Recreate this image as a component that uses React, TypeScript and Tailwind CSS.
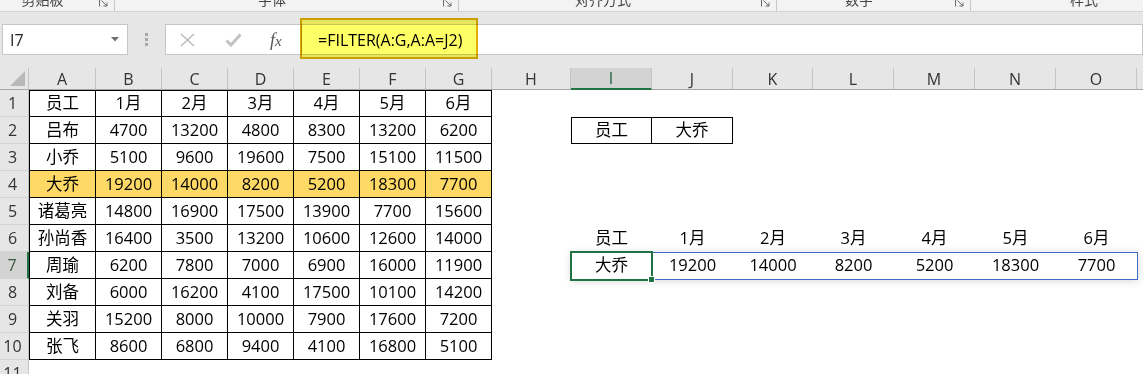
import React from 'react';

// 列宽（与截图像素对齐）
const COLS = [
  { key: 'A', w: 'w-[67px]' },
  { key: 'B', w: 'w-[66px]' },
  { key: 'C', w: 'w-[66px]' },
  { key: 'D', w: 'w-[66px]' },
  { key: 'E', w: 'w-[66px]' },
  { key: 'F', w: 'w-[66px]' },
  { key: 'G', w: 'w-[66px]' },
  { key: 'H', w: 'w-[79px]' },
  { key: 'I', w: 'w-[81px]' },
  { key: 'J', w: 'w-[81px]' },
  { key: 'K', w: 'w-[80px]' },
  { key: 'L', w: 'w-[81px]' },
  { key: 'M', w: 'w-[81px]' },
  { key: 'N', w: 'w-[81px]' },
  { key: 'O', w: 'w-[81px]' },
  { key: 'P', w: 'w-[81px]' },
];

const TABLE: string[][] = [
  ['员工', '1月', '2月', '3月', '4月', '5月', '6月'],
  ['吕布', '4700', '13200', '4800', '8300', '13200', '6200'],
  ['小乔', '5100', '9600', '19600', '7500', '15100', '11500'],
  ['大乔', '19200', '14000', '8200', '5200', '18300', '7700'],
  ['诸葛亮', '14800', '16900', '17500', '13900', '7700', '15600'],
  ['孙尚香', '16400', '3500', '13200', '10600', '12600', '14000'],
  ['周瑜', '6200', '7800', '7000', '6900', '16000', '11900'],
  ['刘备', '6000', '16200', '4100', '17500', '10100', '14200'],
  ['关羽', '15200', '8000', '10000', '7900', '17600', '7200'],
  ['张飞', '8600', '6800', '9400', '4100', '16800', '5100'],
];

const HEADS = ['员工', '1月', '2月', '3月', '4月', '5月', '6月'];
const RESULT = ['大乔', '19200', '14000', '8200', '5200', '18300', '7700'];

const RIBBON = [
  { label: '剪贴板', w: 'w-[115px]', launcher: true },
  { label: '字体', w: 'w-[344px]', launcher: true },
  { label: '对齐方式', w: 'w-[318px]', launcher: true },
  { label: '数字', w: 'w-[194px]', launcher: true },
  { label: '样式', w: 'w-[240px]', launcher: false },
];

interface Cell {
  text?: string;
  cls: string;
}

function cellAt(r: number, c: number): Cell {
  if (r <= 10 && c <= 6) {
    let cls = 'border-black border-r border-b';
    if (c === 0) cls += ' border-l';
    if (r === 1) cls += ' border-t';
    if (r === 4) cls += ' bg-[#ffd966]';
    return { text: TABLE[r - 1][c], cls };
  }
  if (r === 2 && (c === 8 || c === 9)) {
    let cls = 'border-black border-r border-b border-t';
    if (c === 8) cls += ' border-l';
    return { text: c === 8 ? '员工' : '大乔', cls };
  }
  if (r === 6 && c >= 8 && c <= 14) return { text: HEADS[c - 8], cls: '' };
  if (r === 7 && c >= 8 && c <= 14) return { text: RESULT[c - 8], cls: '' };
  return { cls: '' };
}

function Launcher() {
  return (
    <svg width="9" height="9" viewBox="0 0 9 9" className="-mt-[2px] mr-[6px] shrink-0" aria-hidden>
      <path d="M0.5 8.5 V0.5 H8.5" stroke="#6b6b6b" fill="none" />
      <path d="M2.5 2.5 L8 8 M4.5 8 H8 V4.5" stroke="#6b6b6b" fill="none" />
    </svg>
  );
}

export default function App() {
  const rows = Array.from({ length: 11 }, (_, i) => i + 1);

  return (
    <div className="relative h-[374px] w-[1143px] overflow-hidden bg-white font-['Open_Sans','Noto_Sans_CJK_SC',sans-serif] text-black">
      {/* 功能区底部（被裁掉的组名） */}
      <div className="flex h-[12px] overflow-hidden border-b border-[#d5d5d5] bg-[#f3f3f3]">
        {RIBBON.map((g) => (
          <div key={g.label} className={`flex shrink-0 items-start ${g.w} ${g.launcher ? 'border-r border-[#c8c8c8]' : ''}`}>
            <span className="-mt-[7px] flex-1 pr-[14px] text-center text-[14px] leading-[14px] text-[#444]">{g.label}</span>
            {g.launcher && <Launcher />}
          </div>
        ))}
      </div>

      {/* 名称框 + 编辑栏 */}
      <div className="relative flex h-[56px] items-start bg-[#e6e6e6] pt-[12px]">
        <div className="ml-[2px] flex h-[31px] w-[126px] items-center border border-[#c6c6c6] bg-white pl-[7px] pr-[8px]">
          <span className="flex-1 text-[16px] text-[#222]">I7</span>
          <svg width="8" height="5" viewBox="0 0 8 5" aria-hidden>
            <path d="M0 0 H8 L4 4.5 Z" fill="#707070" />
          </svg>
        </div>
        <div className="flex h-[31px] w-[37px] flex-col items-center justify-center gap-[2px]">
          <span className="h-[3px] w-[3px] bg-[#a8a8a8]" />
          <span className="h-[3px] w-[3px] bg-[#a8a8a8]" />
          <span className="h-[3px] w-[3px] bg-[#a8a8a8]" />
        </div>
        <div className="flex h-[31px] w-[137px] items-center border border-[#c6c6c6] bg-white pl-[14px]">
          <svg width="15" height="14" viewBox="0 0 15 14" aria-hidden>
            <path d="M1 1 L14 13 M14 1 L1 13" stroke="#bdbdbd" strokeWidth="1.6" fill="none" />
          </svg>
          <svg width="17" height="14" viewBox="0 0 17 14" className="ml-[30px]" aria-hidden>
            <path d="M1.5 7.5 L6 12 L15.5 1.5" stroke="#c2c2c2" strokeWidth="3" fill="none" />
          </svg>
          <span className="ml-[28px] font-['Liberation_Serif',serif] text-[18px] italic leading-none text-[#555]">
            f<span className="text-[15px]">x</span>
          </span>
        </div>
        <div className="flex h-[31px] flex-1 items-center border-y border-r border-[#c6c6c6] bg-white pl-[16px]">
          <span className="text-[16px] text-black">=FILTER(A:G,A:A=J2)</span>
        </div>
        <div className="pointer-events-none absolute left-[300px] top-[6px] h-[41px] w-[178px] border-2 border-[#e0ae00] bg-[#ffff66] mix-blend-multiply" />
      </div>

      {/* 列标题 */}
      <div className="flex h-[22px] border-b border-[#a6a6a6] bg-[#e6e6e6]">
        <div className="flex w-[29px] shrink-0 items-end justify-end border-r border-[#c4c4c4] pb-[3px] pr-[3px]">
          <svg width="15" height="15" viewBox="0 0 15 15" aria-hidden>
            <path d="M15 0 V15 H0 Z" fill="#b9b9b9" />
          </svg>
        </div>
        {COLS.map((col) => (
          <div
            key={col.key}
            className={`flex shrink-0 items-center justify-center border-r border-[#c4c4c4] text-[16px] ${col.w} ${
              col.key === 'I' ? '-mb-px border-b-2 border-b-[#217346] bg-[#d3d3d3] text-[#1e5e3a]' : 'text-[#333]'
            }`}
          >
            {col.key}
          </div>
        ))}
      </div>

      {/* 工作表主体 */}
      <div className="relative">
        {rows.map((r) => (
          <div key={r} className="flex h-[27px]">
            <div
              className={`flex w-[29px] shrink-0 items-center justify-center border-b border-[#d4d4d4] pr-[3px] text-[16px] ${
                r === 7 ? 'border-r-2 border-r-[#217346] bg-[#d3d3d3] text-[#3d5a45]' : 'border-r border-r-[#c4c4c4] bg-[#e6e6e6] text-[#333]'
              }`}
            >
              {r}
            </div>
            {COLS.map((col, c) => {
              const cell = cellAt(r, c);
              return (
                <div key={col.key} className={`flex shrink-0 items-center justify-center text-[16.5px] ${col.w} ${cell.cls}`}>
                  {cell.text}
                </div>
              );
            })}
          </div>
        ))}

        {/* 溢出区域 I7:O7 */}
        <div className="pointer-events-none absolute left-[571px] top-[162px] h-[28px] w-[567px] border border-[#3b6cc2] shadow-[0_1px_8px_rgba(0,0,0,0.16)]" />
        {/* 活动单元格 I7 */}
        <div className="pointer-events-none absolute left-[570px] top-[161px] h-[30px] w-[83px] border-2 border-[#217346]" />
        <div className="pointer-events-none absolute left-[648px] top-[186px] h-[7px] w-[7px] border border-white bg-[#217346]" />
      </div>
    </div>
  );
}
